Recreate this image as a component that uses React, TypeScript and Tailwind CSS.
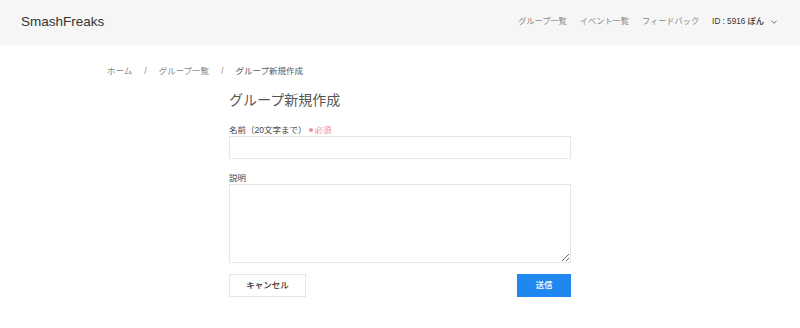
import { ChevronDown } from 'lucide-react';

const navItems = ['グループ一覧', 'イベント一覧', 'フィードバック'];

const crumbs = ['ホーム', 'グループ一覧', 'グループ新規作成'];

export default function App() {
  return (
    <div className="min-h-[328px] bg-white font-['Liberation_Sans','Noto_Sans_CJK_JP',sans-serif] text-[#333]">
      {/* Header */}
      <header className="h-[45px] bg-[#f6f6f6] flex items-center justify-between pl-[21px] pr-[21px]">
        <div className="text-[13.5px] text-[#333]">SmashFreaks</div>
        <nav className="flex items-center gap-[13px] text-[8.2px]">
          {navItems.map((item) => (
            <span key={item} className="text-[#888]">
              {item}
            </span>
          ))}
          <span className="flex items-center gap-[5px] text-[#333] font-medium">
            ID : 5916 ぽん
            <ChevronDown className="w-[10px] h-[10px] text-[#555]" strokeWidth={2} />
          </span>
        </nav>
      </header>

      {/* Breadcrumb */}
      <div className="pl-[107px] pt-[22px] flex items-center text-[8.5px] text-[#888] leading-none">
        {crumbs.map((c, i) => (
          <span key={c} className="flex items-center">
            <span className={i === crumbs.length - 1 ? 'text-[#555]' : ''}>{c}</span>
            {i < crumbs.length - 1 && <span className="px-[12px]">/</span>}
          </span>
        ))}
      </div>

      {/* Form */}
      <div className="w-[342px] mx-auto mt-[17px]">
        <h1 className="text-[14px] text-[#555] leading-none">グループ新規作成</h1>

        <div className="mt-[19px]">
          <label className="flex items-center text-[8.5px] text-[#444] leading-none">
            名前（20文字まで）
            <span className="ml-[3px] text-[#f08ca0] flex items-center">
              <span className="w-[4px] h-[4px] rounded-full bg-[#f08ca0] mr-[1px]" />
              必須
            </span>
          </label>
          <input className="mt-[2px] block w-full h-[23px] border border-[#e6e6e6] bg-white outline-none" />
        </div>

        <div className="mt-[15px]">
          <label className="block text-[8.5px] text-[#444] leading-none">説明</label>
          <textarea className="mt-[1px] block w-full h-[79px] border border-[#e6e6e6] bg-white outline-none" />
        </div>

        <div className="mt-[11px] flex items-center justify-between">
          <button className="w-[77px] h-[23px] border border-[#e6e6e6] bg-white text-[8.5px] text-[#333] font-medium">
            キャンセル
          </button>
          <button className="w-[54px] h-[23px] bg-[#1e88f0] text-[8.5px] text-white font-medium">
            送信
          </button>
        </div>
      </div>
    </div>
  );
}
